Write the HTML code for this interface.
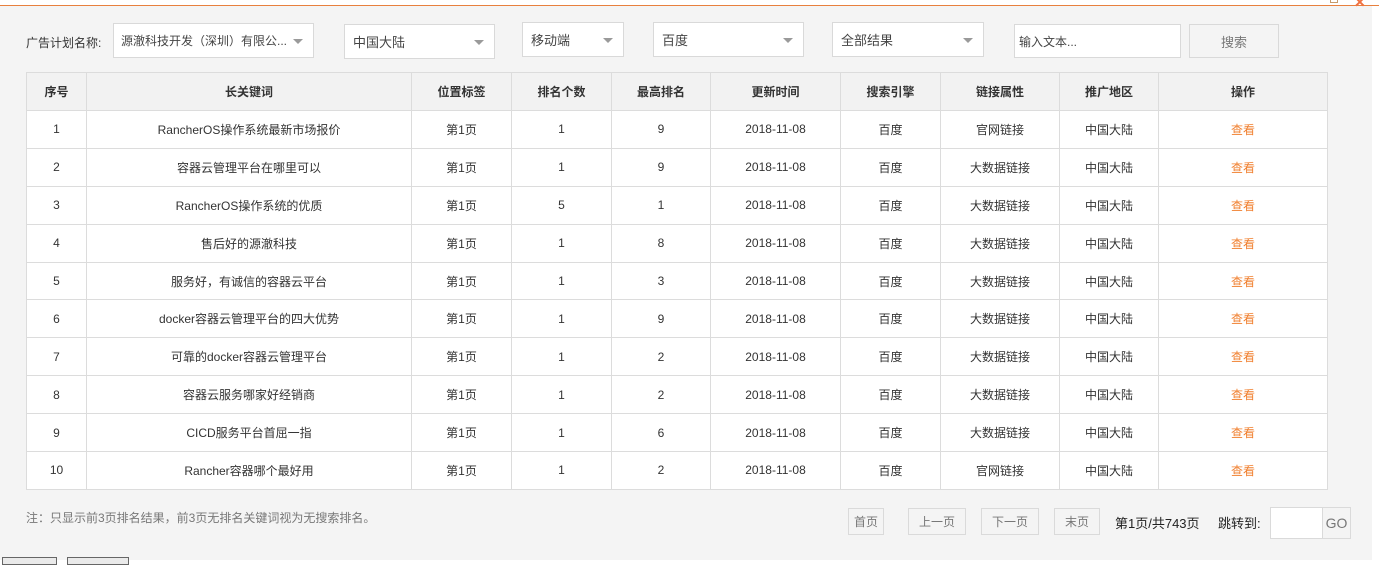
<!DOCTYPE html>
<html><head><meta charset="utf-8"><style>
*{box-sizing:border-box;margin:0;padding:0}
body{width:1379px;height:560px;overflow:hidden;background:#fff;font-family:"Liberation Sans","Noto Sans CJK SC",sans-serif;font-size:12px;color:#333;position:relative}
.bg{position:absolute;left:0;top:6px;width:1372px;height:554px;background:#f4f4f4}
.line{position:absolute;left:0;top:5px;width:1379px;height:1px;background:#e8803e}
.a{position:absolute}
.box{position:absolute;background:#fff;border:1px solid #d9d9d9;font-size:13px;color:#444;padding-left:8px;display:flex;align-items:center;white-space:nowrap;overflow:hidden}
.tri{position:absolute;right:10px;top:50%;margin-top:-2px;border-left:5px solid transparent;border-right:5px solid transparent;border-top:5px solid #9a9a9a}
table{position:absolute;left:26px;top:72px;width:1301px;border-collapse:collapse;background:#fff;table-layout:fixed}
td,th{border:1px solid #dcdcdc;text-align:center;font-size:12px;color:#333;height:37.9px;padding:0;font-weight:normal}
th{background:#f2f2f2;font-weight:bold;height:38px}
.o{color:#f07f2e}
.pb{position:absolute;top:508px;height:27px;border:1px solid #dadada;background:#f4f4f4;color:#777;font-size:12px;display:flex;align-items:center;justify-content:center}
</style></head><body>
<div class="bg"></div><div class="line"></div>
<div class="a" style="left:1330px;top:-3px;width:8px;height:6px;border:1px solid #c79a6a;border-top:none"></div>
<div class="a" style="left:1354px;top:-6px;color:#f07040;font-size:14px;font-weight:bold">✕</div>
<div class="a" style="left:26px;top:34px;font-size:12px;color:#333">广告计划名称:</div>
<div class="box" style="left:113px;top:23px;width:201px;height:35px;font-size:12px;padding-left:7px">源澈科技开发（深圳）有限公...<span class="tri" style="background:#fff"></span></div>
<div class="box" style="left:344px;top:24px;width:151px;height:35px">中国大陆<span class="tri"></span></div>
<div class="box" style="left:522px;top:22px;width:102px;height:35px">移动端<span class="tri"></span></div>
<div class="box" style="left:653px;top:22px;width:151px;height:35px">百度<span class="tri"></span></div>
<div class="box" style="left:832px;top:22px;width:152px;height:35px">全部结果<span class="tri"></span></div>
<div class="box" style="left:1014px;top:24px;width:167px;height:34px;padding-left:4px;font-size:12px">输入文本...</div>
<div class="box" style="left:1189px;top:24px;width:90px;height:34px;background:#f4f4f4;justify-content:center;padding:0;color:#777;font-size:13px">搜索</div>
<table>
<colgroup><col style="width:60px"><col style="width:325px"><col style="width:100px"><col style="width:100px"><col style="width:99px"><col style="width:130px"><col style="width:100px"><col style="width:119px"><col style="width:99px"><col style="width:169px"></colgroup>
<tr><th>序号</th><th>长关键词</th><th>位置标签</th><th>排名个数</th><th>最高排名</th><th>更新时间</th><th>搜索引擎</th><th>链接属性</th><th>推广地区</th><th>操作</th></tr>
<tr><td>1</td><td>RancherOS操作系统最新市场报价</td><td>第1页</td><td>1</td><td>9</td><td>2018-11-08</td><td>百度</td><td>官网链接</td><td>中国大陆</td><td class="o">查看</td></tr>
<tr><td>2</td><td>容器云管理平台在哪里可以</td><td>第1页</td><td>1</td><td>9</td><td>2018-11-08</td><td>百度</td><td>大数据链接</td><td>中国大陆</td><td class="o">查看</td></tr>
<tr><td>3</td><td>RancherOS操作系统的优质</td><td>第1页</td><td>5</td><td>1</td><td>2018-11-08</td><td>百度</td><td>大数据链接</td><td>中国大陆</td><td class="o">查看</td></tr>
<tr><td>4</td><td>售后好的源澈科技</td><td>第1页</td><td>1</td><td>8</td><td>2018-11-08</td><td>百度</td><td>大数据链接</td><td>中国大陆</td><td class="o">查看</td></tr>
<tr><td>5</td><td>服务好，有诚信的容器云平台</td><td>第1页</td><td>1</td><td>3</td><td>2018-11-08</td><td>百度</td><td>大数据链接</td><td>中国大陆</td><td class="o">查看</td></tr>
<tr><td>6</td><td>docker容器云管理平台的四大优势</td><td>第1页</td><td>1</td><td>9</td><td>2018-11-08</td><td>百度</td><td>大数据链接</td><td>中国大陆</td><td class="o">查看</td></tr>
<tr><td>7</td><td>可靠的docker容器云管理平台</td><td>第1页</td><td>1</td><td>2</td><td>2018-11-08</td><td>百度</td><td>大数据链接</td><td>中国大陆</td><td class="o">查看</td></tr>
<tr><td>8</td><td>容器云服务哪家好经销商</td><td>第1页</td><td>1</td><td>2</td><td>2018-11-08</td><td>百度</td><td>大数据链接</td><td>中国大陆</td><td class="o">查看</td></tr>
<tr><td>9</td><td>CICD服务平台首屈一指</td><td>第1页</td><td>1</td><td>6</td><td>2018-11-08</td><td>百度</td><td>大数据链接</td><td>中国大陆</td><td class="o">查看</td></tr>
<tr><td>10</td><td>Rancher容器哪个最好用</td><td>第1页</td><td>1</td><td>2</td><td>2018-11-08</td><td>百度</td><td>官网链接</td><td>中国大陆</td><td class="o">查看</td></tr>
</table>
<div class="a" style="left:26px;top:509px;color:#777;font-size:12px">注：只显示前3页排名结果，前3页无排名关键词视为无搜索排名。</div>
<div class="pb" style="left:848px;width:36px">首页</div>
<div class="pb" style="left:908px;width:58px">上一页</div>
<div class="pb" style="left:981px;width:58px">下一页</div>
<div class="pb" style="left:1054px;width:46px">末页</div>
<div class="a" style="left:1115px;top:513px;font-size:13px;color:#222">第1页/共743页</div>
<div class="a" style="left:1218px;top:513px;font-size:13px;color:#222">跳转到:</div>
<div class="a" style="left:1270px;top:507px;width:53px;height:32px;background:#fff;border:1px solid #dadada"></div>
<div class="a" style="left:1322px;top:507px;width:29px;height:32px;border:1px solid #dadada;color:#777;font-size:14px;display:flex;align-items:center;justify-content:center">GO</div>
<div class="a" style="left:2px;top:557px;width:55px;height:8px;border:1px solid #666;background:#eaeaea"></div>
<div class="a" style="left:67px;top:557px;width:62px;height:8px;border:1px solid #666;background:#eaeaea"></div>
</body></html>
